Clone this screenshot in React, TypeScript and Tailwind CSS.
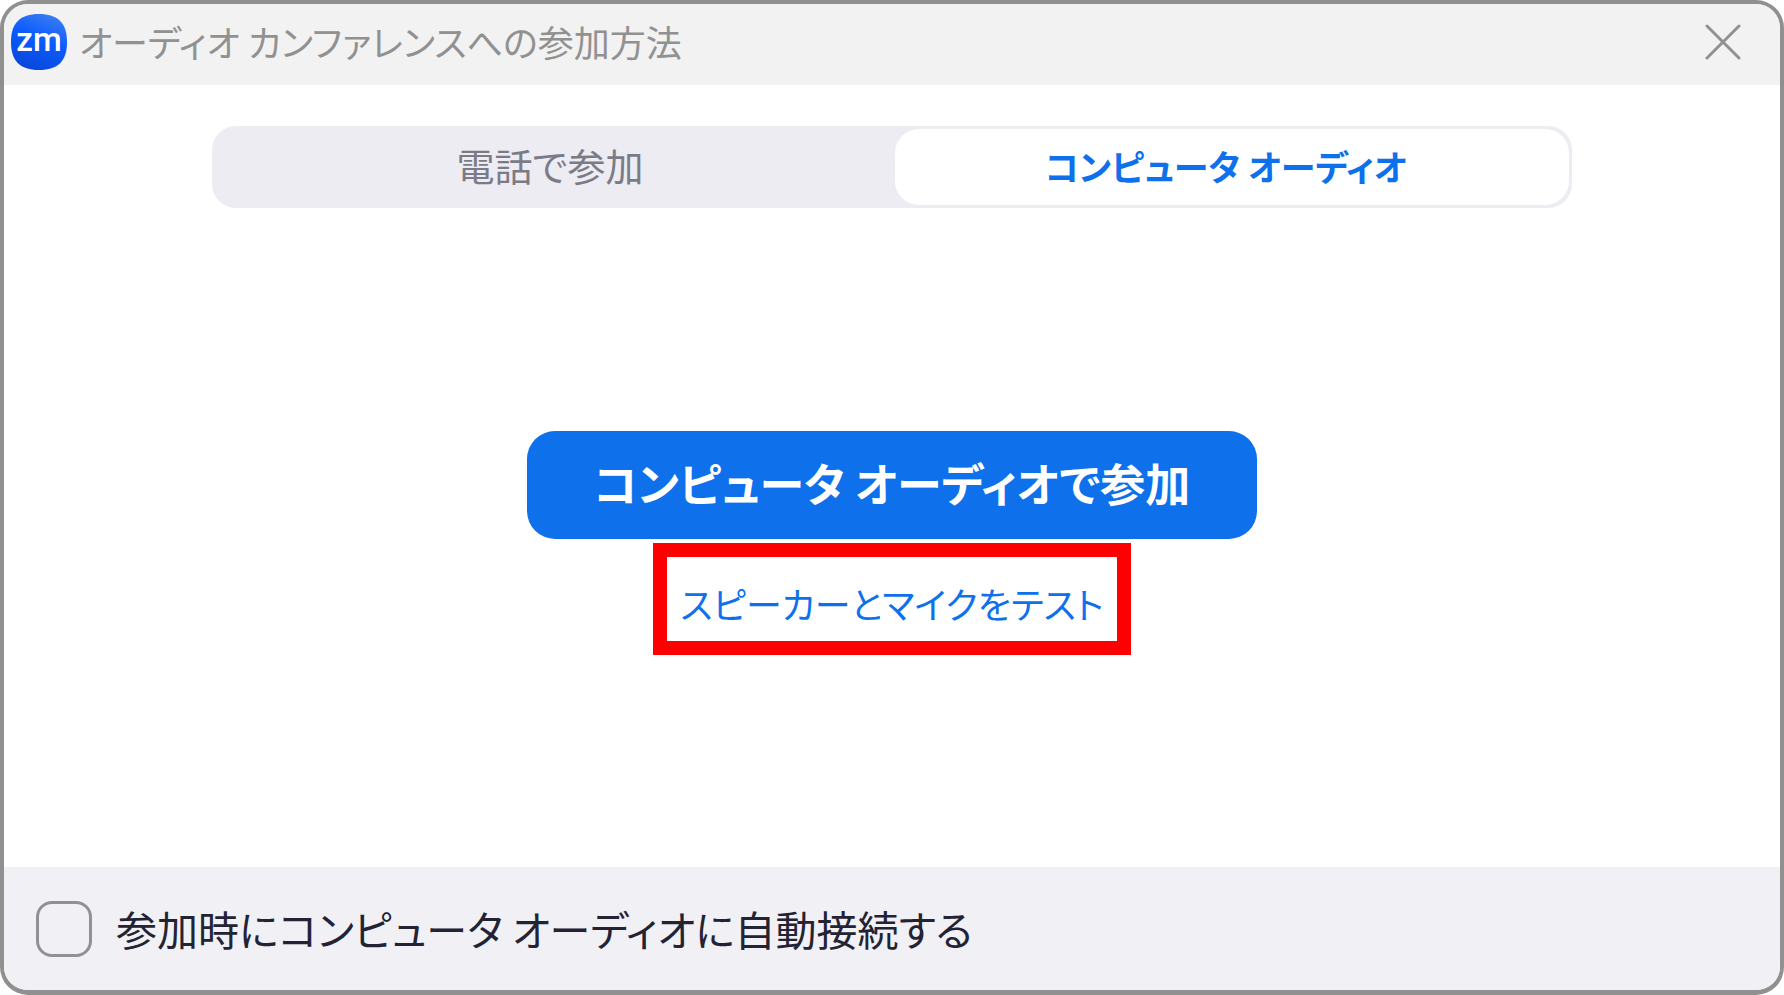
import { useState } from "react";

function ZoomLogo() {
  return (
    <svg className="w-14 h-14 shrink-0" viewBox="0 0 56 56" role="img" aria-label="Zoom">
      <defs>
        <linearGradient id="zoom-blue" x1="0.75" y1="0" x2="0.35" y2="1">
          <stop offset="0" stopColor="#3d7df0" />
          <stop offset="0.45" stopColor="#0b5cff" />
          <stop offset="1" stopColor="#0a47d8" />
        </linearGradient>
      </defs>
      <path
        d="M28 0C47 0 56 9 56 28S47 56 28 56S0 47 0 28S9 0 28 0Z"
        fill="url(#zoom-blue)"
      />
      <text
        x="28"
        y="37"
        textAnchor="middle"
        fill="#fff"
        className="font-['Roboto',sans-serif] text-[33px] font-medium"
      >
        zm
      </text>
    </svg>
  );
}

function TitleBar() {
  return (
    <header className="flex h-[81px] items-center bg-[#f2f2f2] pb-1.5 pl-[7px] pr-[39px] text-[#919191]">
      <ZoomLogo />
      <h1 className="ml-3 pb-0.5 text-[36px] leading-none">オーディオ カンファレンスへの参加方法</h1>
      <button type="button" aria-label="閉じる" className="ml-auto">
        <svg className="w-9 h-9" viewBox="0 0 36 36" fill="none" stroke="currentColor" strokeWidth="3" strokeLinecap="round">
          <path d="M2 2L34 34M34 2L2 34" />
        </svg>
      </button>
    </header>
  );
}

export default function App() {
  const [tab, setTab] = useState("computer");
  const [autoConnect, setAutoConnect] = useState(false);

  const active = "bg-white text-[35px] font-bold text-[#0e71eb]";
  const inactive = "text-[38px] text-[#7b7b87]";

  return (
    <div className="flex min-h-screen flex-col overflow-hidden rounded-[28px] border-4 border-b-[5px] border-[#8f908f] bg-white font-['Noto_Sans_CJK_JP',sans-serif] [font-feature-settings:'palt']">
      <TitleBar />

      <main className="flex grow flex-col px-52 pt-[41px]">
        <div role="tablist" className="grid grid-cols-2 gap-1.5 rounded-3xl bg-[#ececf2] p-[3px] leading-none">
          <button
            type="button"
            role="tab"
            aria-selected={tab === "phone"}
            onClick={() => setTab("phone")}
            className={`h-[76px] rounded-3xl pr-1 pb-1 ${tab === "phone" ? active : inactive}`}
          >
            電話で参加
          </button>
          <button
            type="button"
            role="tab"
            aria-selected={tab === "computer"}
            onClick={() => setTab("computer")}
            className={`h-[76px] rounded-3xl pr-3 pb-1 ${tab === "computer" ? active : inactive}`}
          >
            コンピュータ オーディオ
          </button>
        </div>

        <div className="flex grow flex-col items-center justify-center gap-1 pt-2.5">
          <button
            type="button"
            className="h-[108px] w-[730px] rounded-[28px] bg-[#0e71eb] pb-1 text-[45px] font-bold leading-none text-white"
          >
            コンピュータ オーディオで参加
          </button>
          <div className="flex h-28 w-[478px] items-center justify-center border-[14px] border-[#ff0000] pt-2">
            <a href="#test" className="whitespace-nowrap text-[36px] leading-none text-[#0e71eb]">
              スピーカーとマイクをテスト
            </a>
          </div>
        </div>
      </main>

      <footer className="flex h-[123px] items-center bg-[#f1f1f5] pl-8">
        <input
          id="auto-connect"
          type="checkbox"
          checked={autoConnect}
          onChange={(e) => setAutoConnect(e.target.checked)}
          className="h-14 w-14 appearance-none rounded-2xl border-[3px] border-[#909096] checked:bg-[#0e71eb]"
        />
        <label htmlFor="auto-connect" className="ml-6 text-[41px] leading-none text-[#232333]">
          参加時にコンピュータ オーディオに自動接続する
        </label>
      </footer>
    </div>
  );
}
